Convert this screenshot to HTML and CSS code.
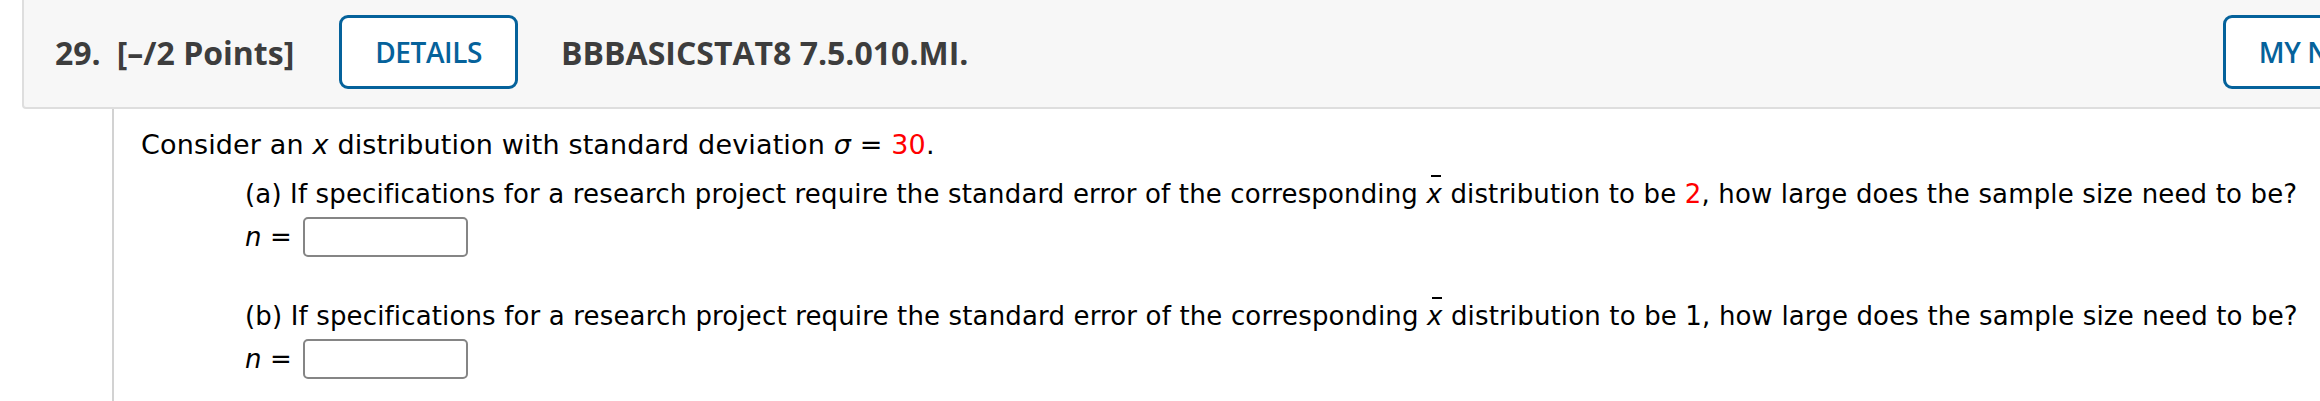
FILE: index.html
```html
<!DOCTYPE html>
<html lang="en">
<head>
    <meta charset="UTF-8">
    <meta name="viewport" content="width=device-width, initial-scale=1.0">
    <title>Question 29</title>
    <link rel="stylesheet" href="styles.css">
</head>
<body>

    <div class="question">
        <header class="qhead">
            <span class="qnum">29.</span>
            <span class="qpoints">[&ndash;/2 Points]</span>
            <button class="qbtn">DETAILS</button>
            <span class="qtitle">BBBASICSTAT8 7.5.010.MI.</span>
            <button class="qbtn notes">MY NOTES</button>
        </header>

        <div class="qbody">
            <p class="intro">Consider an <i>x</i> distribution with standard deviation <i>&sigma;</i> = <span class="red">30</span>.</p>

            <div class="part">
                <p>(a) If specifications for a research project require the standard error of the corresponding <span class="xbar"><i>x</i></span> distribution to be <span class="red">2</span>, how large does the sample size need to be?</p>
                <div class="answer">
                    <label for="ansA"><i>n</i> =</label>
                    <input type="text" id="ansA">
                </div>
            </div>

            <div class="part second">
                <p>(b) If specifications for a research project require the standard error of the corresponding <span class="xbar"><i>x</i></span> distribution to be 1, how large does the sample size need to be?</p>
                <div class="answer">
                    <label for="ansB"><i>n</i> =</label>
                    <input type="text" id="ansB">
                </div>
            </div>
        </div>
    </div>

</body>
</html>
```

FILE: styles.css
```css
/* page */
body {
    margin: 0;
    background-color: #ffffff;
    overflow: hidden;
    font-family: 'DejaVu Sans', Verdana, sans-serif;
}

.question {
    margin-left: 22px;
}

/* question header bar */
.qhead {
    display: flex;
    align-items: center;
    margin-right: -200px;
    padding: 15px 86px 18px 31px;
    background-color: #f7f7f7;
    border: 2px solid #dedede;
    border-top: none;
    border-radius: 0 0 0 4px;
    font-family: 'Open Sans', sans-serif;
    color: #3d3d3d;
}

.qnum, .qpoints, .qtitle {
    font-size: 32px;
    font-weight: 700;
}

.qpoints {
    margin-left: 16px;
}

.qbtn {
    height: 74px;
    margin-left: 45px;
    padding: 0 33px;
    background-color: #ffffff;
    border: 3px solid #05629b;
    border-radius: 9px;
    color: #05629b;
    font-family: 'Open Sans', sans-serif;
    font-size: 28px;
    font-weight: 600;
    letter-spacing: -0.4px;
}

.qtitle {
    margin-left: 43px;
}

.notes {
    margin-left: auto;
}

/* question body */
.qbody {
    margin-left: 90px;
    padding: 18px 0 24px 27px;
    border-left: 2px solid #d2d2d2;
    font-size: 26px;
    letter-spacing: 0.15px;
    color: #000000;
}

.qbody p {
    margin: 0;
    line-height: 35px;
}

.qbody .intro {
    font-size: 27px;
}

.red {
    color: #ff0000;
}

.part {
    margin-top: 15px;
    padding-left: 104px;
}

.part.second {
    margin-top: 42px;
}

.xbar {
    position: relative;
}

.xbar::before {
    content: "";
    position: absolute;
    left: 5px;
    top: -4px;
    width: 10px;
    height: 2px;
    background-color: #000000;
}

.answer {
    display: flex;
    align-items: center;
    margin-top: 5px;
}

.answer label {
    line-height: 35px;
    margin-right: 11px;
}

.answer input {
    box-sizing: border-box;
    width: 165px;
    height: 40px;
    padding: 0 6px;
    border: 2px solid #858585;
    border-radius: 5px;
    font-family: 'DejaVu Sans', sans-serif;
    font-size: 25px;
}
```
